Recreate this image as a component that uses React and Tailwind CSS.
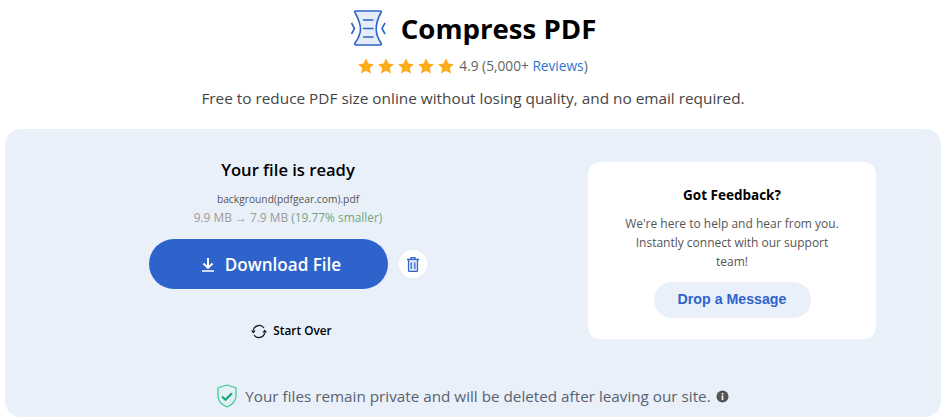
const font = { fontFamily: '"Open Sans", "Noto Sans", sans-serif' };

function Star() {
  return (
    <svg width="16" height="16" viewBox="0 0 24 24">
      <path
        fill="#fdab1b"
        d="M12 .5l3.600 7.600 8.200 1.100-6 5.800 1.500 8.300-7.300-4-7.300 4 1.500-8.300-6-5.800 8.200-1.100z"
      />
    </svg>
  );
}

function CompressIcon() {
  return (
    <svg width="36" height="36" viewBox="0 0 36 36" fill="none" stroke="#2f63cc" strokeWidth="1.600">
      <path
        d="M5.500 1h25c.6 0 .9.500.7 1-2.700 5-5 10.500-5 17s2.300 10.500 5 14.500c.2.600-.1 1.500-.7 1.500h-25c-.6 0-.9-.9-.7-1.500C7.500 29.500 10.500 25.500 10.500 19S7.500 7 4.800 2c-.2-.500.1-1 .7-1z"
        fill="#e6edfa"
        strokeLinejoin="round"
      />
      <path d="M13 10h10.500M13 18.500h10.500M13 27h10.500" />
      <path d="M1.500 13l3 5.500-3 5.500M35 13l-3 5.500 3 5.500" />
    </svg>
  );
}

function DownloadIcon() {
  return (
    <svg width="12" height="14" viewBox="0 0 12 14" fill="none" stroke="currentColor">
      <path d="M6 0v9.500" strokeWidth="2" />
      <path d="M1.500 5.500L6 10l4.500-4.500" strokeWidth="1.800" />
      <path d="M0 13h12" strokeWidth="1.500" />
    </svg>
  );
}

function TrashIcon() {
  return (
    <svg width="12" height="15" viewBox="0 0 12 15" fill="none" stroke="#2f63cc" strokeWidth="1.200">
      <path d="M4 2V.700h4V2" />
      <path d="M0 2.500h12" strokeWidth="1.500" />
      <path d="M1.500 3v10.500c0 .5.300.9.800.9h7.400c.5 0 .8-.4.8-.9V3" fill="#dbe5f7" />
      <path d="M4.200 5.500v6.500M7.800 5.500v6.500" />
    </svg>
  );
}

function OverIcon() {
  return (
    <svg width="16" height="15" viewBox="0 0 16 15" fill="none">
      <path d="M2.300 6A6 6 0 0 1 13 4M13.700 9A6 6 0 0 1 3 11" stroke="#111" strokeWidth="1.200" />
      <path d="M0 6.500h4.600L2.300 9.500zM11.400 8.500h4.600L13.700 5.500z" fill="#111" />
    </svg>
  );
}

function ShieldCheck() {
  return (
    <svg width="20" height="24" viewBox="0 0 20 24" fill="none">
      <path
        d="M10 1l9 2.700v8.300c0 4.800-3.800 8.700-9 11C4.800 20.700 1 16.800 1 12V3.700z"
        fill="#e2f2f0"
        stroke="#3cc4a2"
        strokeWidth="1.200"
        strokeLinejoin="round"
      />
      <path d="M5 12.500l3.500 3.300 6.500-6.500" stroke="#12a57f" strokeWidth="2" />
    </svg>
  );
}

function InfoDot() {
  return (
    <svg width="13" height="13" viewBox="0 0 13 13">
      <circle cx="6.500" cy="6.500" r="6" fill="#555" />
      <rect x="5.700" y="5.500" width="1.600" height="4.500" fill="#fff" />
      <rect x="5.700" y="3" width="1.600" height="1.600" fill="#fff" />
    </svg>
  );
}

export default function App() {
  return (
    <div style={font} className="w-[946px] h-[420px] overflow-hidden bg-white px-[5px] text-black">
      <header className="flex flex-col items-center h-[129px]">
        <div className="flex items-center gap-[15px] mt-[8px] h-[40px]">
          <CompressIcon />
          <h1 className="text-[27.600px] font-bold leading-[40px]">Compress PDF</h1>
        </div>
        <div className="flex items-center mt-[9px] h-[18px]">
          <div className="flex gap-[4px] mr-[5px]">
            <Star />
            <Star />
            <Star />
            <Star />
            <Star />
          </div>
          <span className="text-[13.700px] text-[#5f6368] leading-[18px]">
            4.9 (5,000+ <span className="text-[#2f74d0]">Reviews</span>)
          </span>
        </div>
        <p className="mt-[12px] text-[15.350px] text-[#444] leading-[22px]">
          Free to reduce PDF size online without losing quality, and no email required.
        </p>
      </header>

      <main className="h-[288px] rounded-[16px] bg-[#e9f0fa] px-[65px]">
        <div className="flex items-start justify-between">
          <section className="w-[436px] flex flex-col items-center pt-[29px]">
            <h2 className="text-[16.600px] font-semibold leading-[24px]">Your file is ready</h2>
            <p className="mt-[9px] text-[10.250px] text-[#555] leading-[16px]">background(pdfgear.com).pdf</p>
            <p className="mt-[1px] text-[11.900px] text-[#9a9a9a] leading-[18px]">
              9.9 MB → 7.9 MB <span className="text-[#6fa67f]">(19.77% smaller)</span>
            </p>
            <div className="flex items-center gap-[11px] mt-[13px]">
              <button className="flex items-center justify-center gap-[11px] w-[239px] h-[50px] pt-[1px] pl-[6px] rounded-full bg-[#2f63cc] text-white text-[17.100px] font-semibold">
                <DownloadIcon />
                Download File
              </button>
              <button className="flex items-center justify-center w-[28px] h-[28px] rounded-full bg-white">
                <TrashIcon />
              </button>
            </div>
            <button className="flex items-center gap-[6px] ml-[7px] mt-[32px] h-[20px] text-[11.800px] font-semibold">
              <OverIcon />
              Start Over
            </button>
          </section>

          <aside className="mt-[33px] w-[288px] h-[177px] rounded-[12px] bg-white flex flex-col items-center pt-[23px]">
            <h3 className="text-[13.500px] font-bold leading-[20px]">Got Feedback?</h3>
            <p className="mt-[9px] w-[224px] text-center text-[12px] text-[#555] leading-[19px]">
              We're here to help and hear from you. Instantly connect with our support team!
            </p>
            <button
              style={{ fontFamily: '"Liberation Sans", Arial, sans-serif' }}
              className="mt-[11px] w-[157px] h-[36px] rounded-full bg-[#e9f0fa] text-[#2f63cc] text-[14.200px] font-bold"
            >
              Drop a Message
            </button>
          </aside>
        </div>

        <div className="flex items-center justify-center mt-[43px] h-[24px]">
          <ShieldCheck />
          <span className="ml-[8px] text-[15.250px] text-[#5a6270] leading-[22px]">
            Your files remain private and will be deleted after leaving our site.
          </span>
          <span className="ml-[5px] flex">
            <InfoDot />
          </span>
        </div>
      </main>
    </div>
  );
}
